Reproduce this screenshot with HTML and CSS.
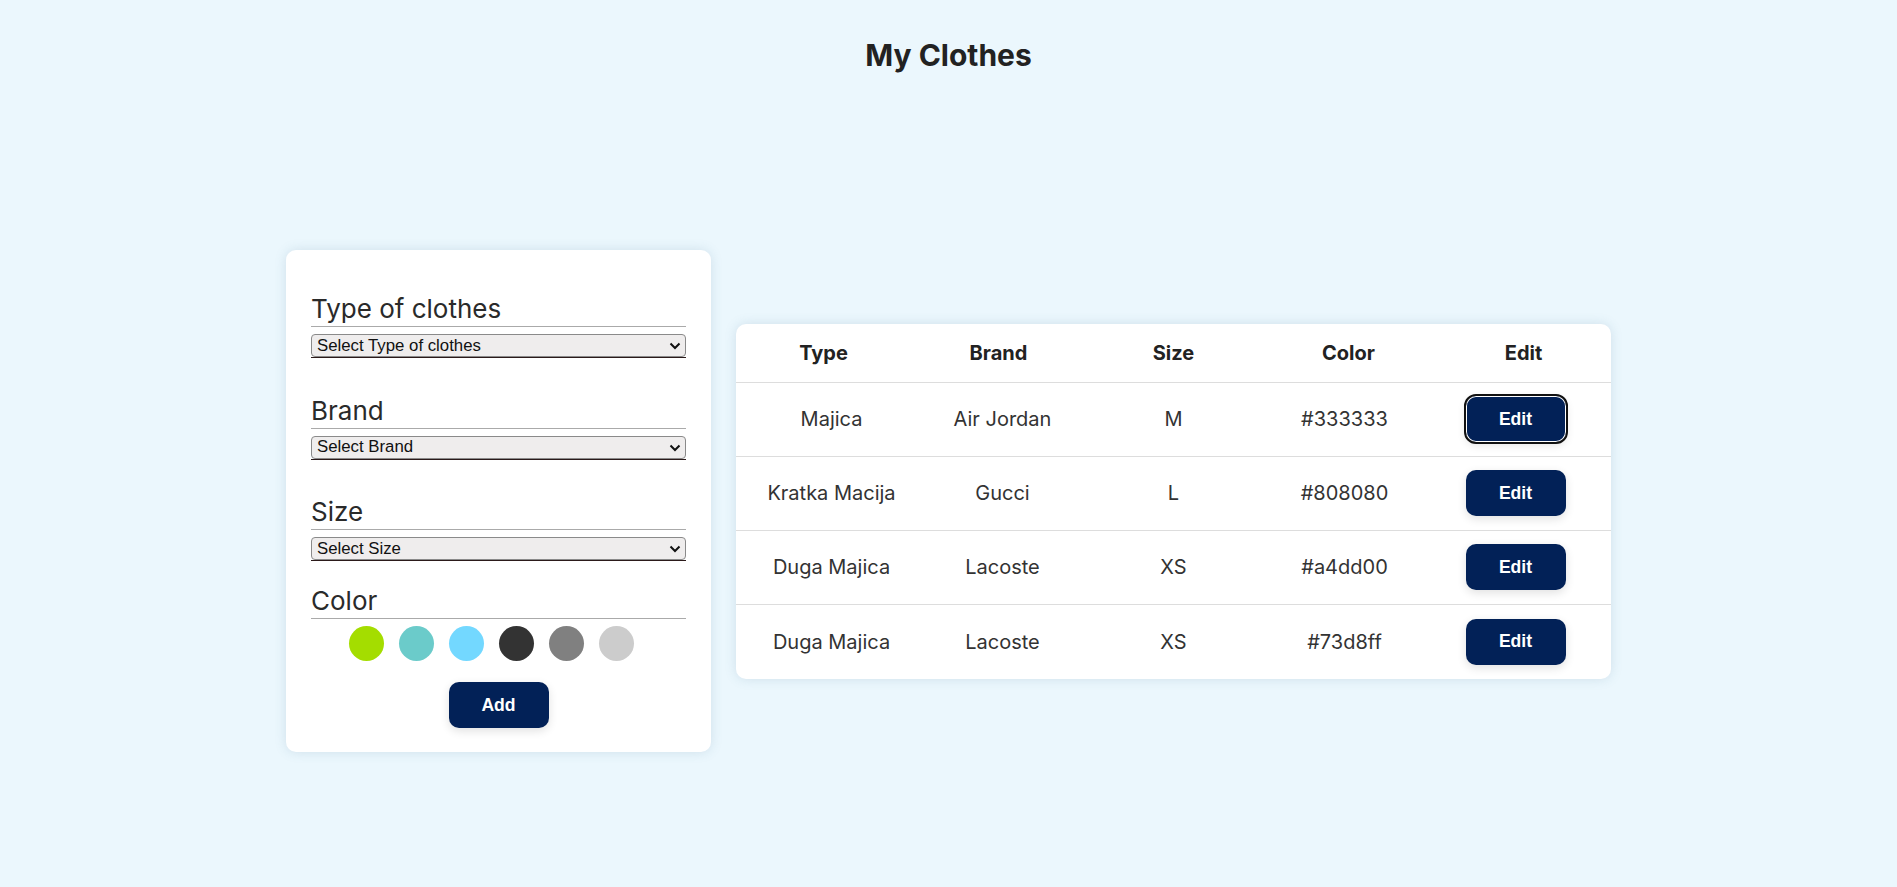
FILE: index.html
```html
<!DOCTYPE html>
<html lang="en">
<head>
<meta charset="utf-8">
<title>My Clothes</title>
<link rel="stylesheet" href="styles.css">
</head>
<body>
<h1 class="title">My Clothes</h1>
<main class="layout">
  <form class="form-card">
    <div class="field">
      <label class="field-label">Type of clothes</label>
      <div class="select-wrap">
        <select class="select"><option>Select Type of clothes</option></select>
        <svg class="chev" viewBox="0 0 12 8" width="12" height="8"><path d="M1.5 1.5 L6 6 L10.5 1.5" fill="none" stroke="#111" stroke-width="2"/></svg>
      </div>
    </div>
    <div class="field">
      <label class="field-label">Brand</label>
      <div class="select-wrap">
        <select class="select"><option>Select Brand</option></select>
        <svg class="chev" viewBox="0 0 12 8" width="12" height="8"><path d="M1.5 1.5 L6 6 L10.5 1.5" fill="none" stroke="#111" stroke-width="2"/></svg>
      </div>
    </div>
    <div class="field field-before-color">
      <label class="field-label">Size</label>
      <div class="select-wrap">
        <select class="select"><option>Select Size</option></select>
        <svg class="chev" viewBox="0 0 12 8" width="12" height="8"><path d="M1.5 1.5 L6 6 L10.5 1.5" fill="none" stroke="#111" stroke-width="2"/></svg>
      </div>
    </div>
    <div class="field field-color">
      <label class="field-label">Color</label>
      <div class="swatches">
        <span class="swatch" style="background:#a4dd00"></span>
        <span class="swatch" style="background:#6bcbca"></span>
        <span class="swatch" style="background:#73d8ff"></span>
        <span class="swatch" style="background:#333333"></span>
        <span class="swatch" style="background:#808080"></span>
        <span class="swatch" style="background:#cccccc"></span>
      </div>
    </div>
    <div class="actions">
      <button type="button" class="btn">Add</button>
    </div>
  </form>

  <section class="table-card" role="table">
    <div class="row row-head" role="row">
      <div class="cell" role="columnheader">Type</div>
      <div class="cell" role="columnheader">Brand</div>
      <div class="cell" role="columnheader">Size</div>
      <div class="cell" role="columnheader">Color</div>
      <div class="cell" role="columnheader">Edit</div>
    </div>
    <div class="row row-body" role="row">
      <div class="cell" role="cell">Majica</div>
      <div class="cell" role="cell">Air Jordan</div>
      <div class="cell" role="cell">M</div>
      <div class="cell" role="cell">#333333</div>
      <div class="cell" role="cell"><button type="button" class="btn btn-focus">Edit</button></div>
    </div>
    <div class="row row-body" role="row">
      <div class="cell" role="cell">Kratka Macija</div>
      <div class="cell" role="cell">Gucci</div>
      <div class="cell" role="cell">L</div>
      <div class="cell" role="cell">#808080</div>
      <div class="cell" role="cell"><button type="button" class="btn">Edit</button></div>
    </div>
    <div class="row row-body" role="row">
      <div class="cell" role="cell">Duga Majica</div>
      <div class="cell" role="cell">Lacoste</div>
      <div class="cell" role="cell">XS</div>
      <div class="cell" role="cell">#a4dd00</div>
      <div class="cell" role="cell"><button type="button" class="btn">Edit</button></div>
    </div>
    <div class="row row-body" role="row">
      <div class="cell" role="cell">Duga Majica</div>
      <div class="cell" role="cell">Lacoste</div>
      <div class="cell" role="cell">XS</div>
      <div class="cell" role="cell">#73d8ff</div>
      <div class="cell" role="cell"><button type="button" class="btn">Edit</button></div>
    </div>
  </section>
</main>
</body>
</html>
```

FILE: styles.css
```css
* { box-sizing: border-box; }

html, body {
  margin: 0;
  padding: 0;
}

body {
  background: #ebf7fd;
  font-family: Inter, "Noto Sans", sans-serif;
  color: #333;
  min-height: 887px;
}

.title {
  margin: 0;
  padding-top: 37px;
  font-size: 30px;
  line-height: 36px;
  font-weight: 700;
  text-align: center;
  color: #222;
}

.layout {
  display: flex;
  justify-content: center;
  align-items: center;
  gap: 25px;
  margin-top: 177px;
}

.form-card {
  width: 425px;
  background: #fff;
  border-radius: 10px;
  padding: 43px 25px 24px;
  box-shadow: 0 0 12px rgba(80, 120, 150, 0.18);
}

.field {
  margin-bottom: 36.5px;
}

.field-before-color {
  margin-bottom: 24px;
}

.field-color {
  margin-bottom: 0;
}

.field-label {
  display: block;
  font-size: 26px;
  line-height: 31px;
  padding-bottom: 2px;
  border-bottom: 1px solid #aaa;
  color: #2a2a2a;
}

.select-wrap {
  position: relative;
  margin-top: 7px;
  border-bottom: 1px solid #2b1a1a;
}

.select {
  display: block;
  width: 100%;
  height: 23px;
  -webkit-appearance: none;
  appearance: none;
  background: #efeded;
  border: 1px solid #8a8a8a;
  border-radius: 4px;
  font-family: "Liberation Sans", Arial, sans-serif;
  font-size: 16.8px;
  line-height: 20px;
  color: #111;
  padding: 0 5px;
  margin: 0;
}

.chev {
  position: absolute;
  right: 5px;
  top: 8px;
  pointer-events: none;
}

.swatches {
  display: flex;
  justify-content: center;
  margin-top: 7px;
}

.swatch {
  width: 35px;
  height: 35px;
  border-radius: 50%;
  margin-right: 15px;
}

.actions {
  display: flex;
  justify-content: center;
  margin-top: 21px;
}

.btn {
  width: 100px;
  height: 46px;
  border: none;
  border-radius: 10px;
  background: #022157;
  color: #fff;
  font-family: "Liberation Sans", Arial, sans-serif;
  font-weight: 700;
  font-size: 17.6px;
  box-shadow: 0 3px 10px rgba(0, 0, 0, 0.12);
  cursor: pointer;
}

.btn-focus {
  outline: 2px solid #111;
  outline-offset: 0;
  box-shadow: inset 0 0 0 1px #fff, 0 3px 10px rgba(0, 0, 0, 0.12);
}

.table-card {
  width: 875px;
  background: #fff;
  border-radius: 10px;
  box-shadow: 0 0 12px rgba(80, 120, 150, 0.18);
  overflow: hidden;
}

.row {
  display: grid;
  grid-template-columns: repeat(5, 1fr);
  align-items: center;
  text-align: center;
}

.row-head {
  height: 59px;
  border-bottom: 1px solid #ddd;
  font-size: 20px;
  font-weight: 700;
  color: #222;
}

.row-body {
  height: 74px;
  padding: 0 10px;
  border-bottom: 1px solid #ddd;
  font-size: 20px;
  color: #333;
}

.row-body:last-child {
  border-bottom: none;
}

.cell {
  display: flex;
  justify-content: center;
  align-items: center;
}
```
